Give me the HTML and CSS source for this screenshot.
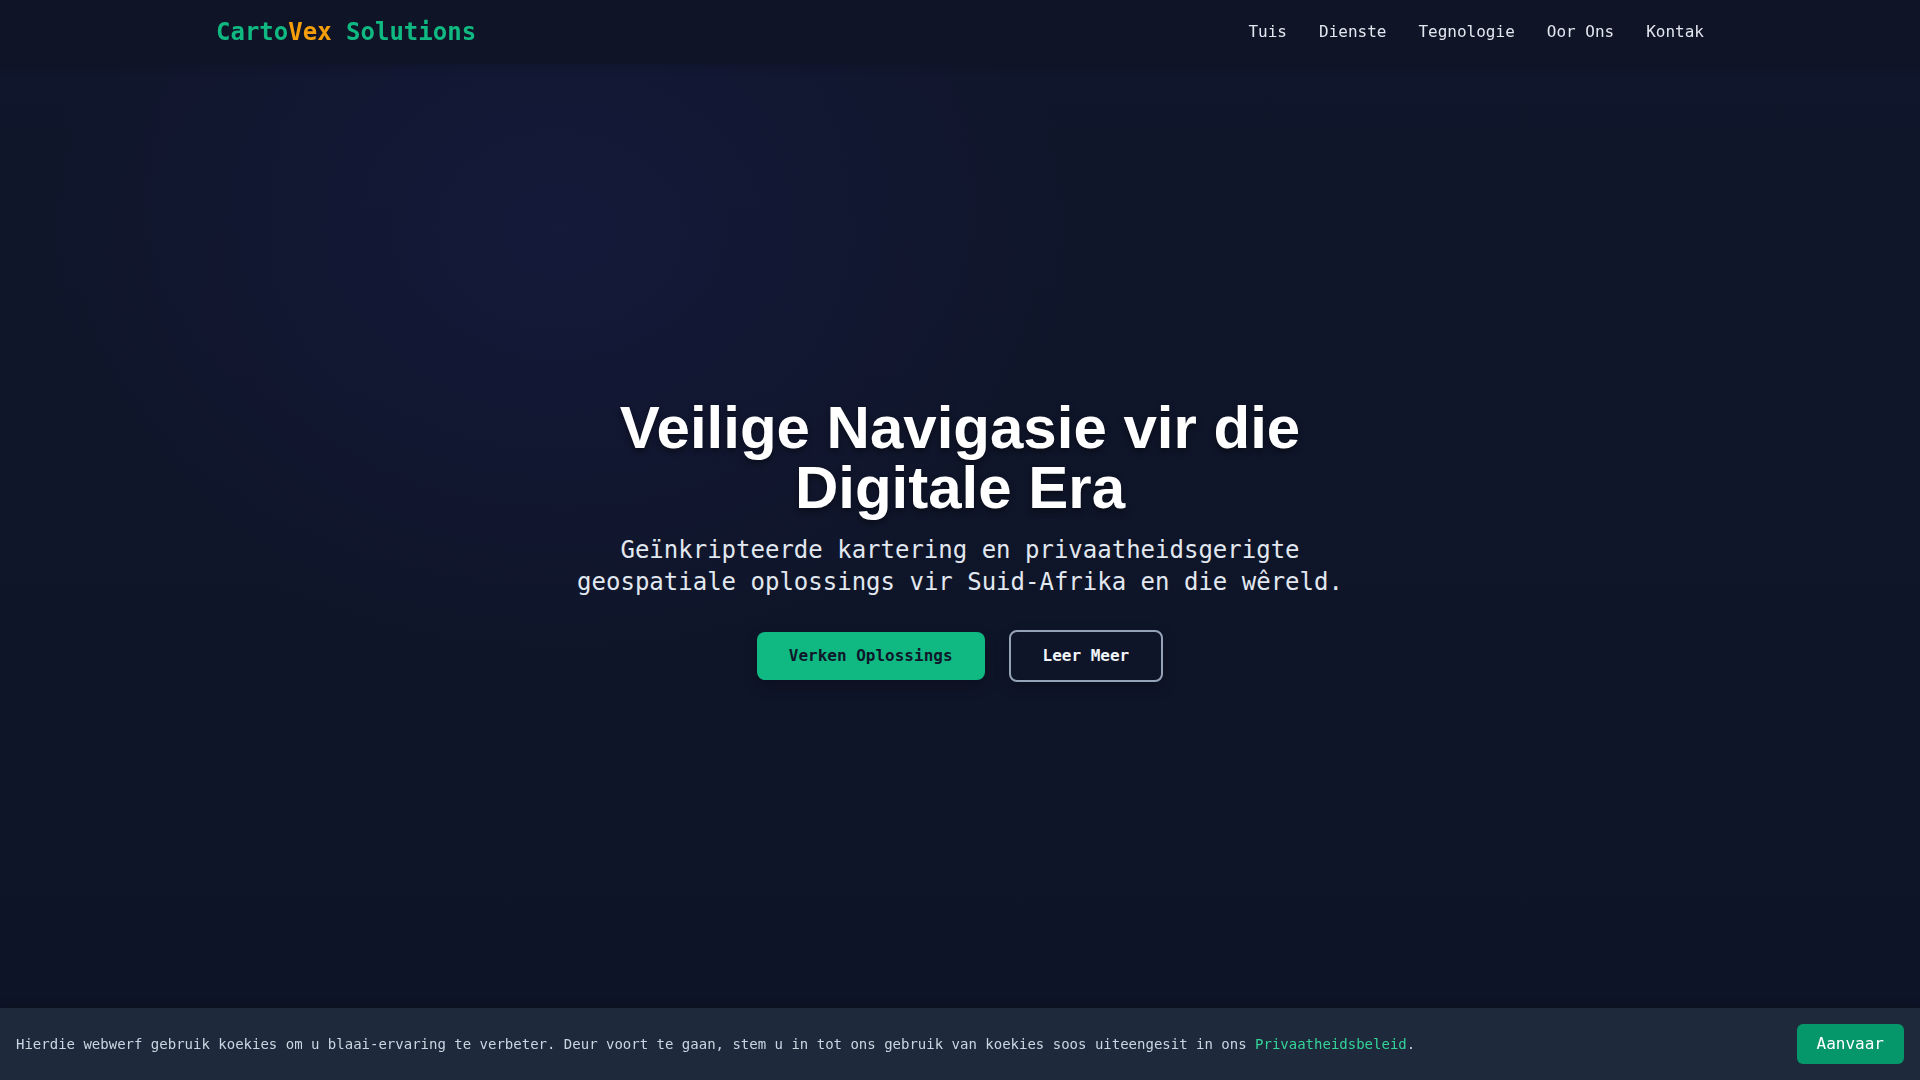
FILE: index.html
```html
<!DOCTYPE html>
<html lang="af">

<head>
    <meta charset="UTF-8">
    <title>CartoVex Solutions</title>
    <link rel="stylesheet" href="styles.css">
</head>

<body>
    <header class="site-header">
        <div class="container header-inner">
            <a href="#" class="logo">Carto<span class="logo-accent">Vex</span> Solutions</a>
            <nav class="main-nav">
                <a href="#tuis">Tuis</a>
                <a href="#dienste">Dienste</a>
                <a href="#tegnologie">Tegnologie</a>
                <a href="#oor-ons">Oor Ons</a>
                <a href="#kontak">Kontak</a>
            </nav>
        </div>
    </header>

    <section class="hero" id="tuis">
        <div class="hero-content">
            <h1 class="hero-title">Veilige Navigasie vir die Digitale Era</h1>
            <p class="hero-text">Geïnkripteerde kartering en privaatheidsgerigte geospatiale oplossings vir Suid-Afrika en die wêreld.</p>
            <div class="hero-actions">
                <a href="#dienste" class="btn btn-primary">Verken Oplossings</a>
                <a href="#oor-ons" class="btn btn-outline">Leer Meer</a>
            </div>
        </div>
    </section>

    <div class="cookie-bar">
        <p>Hierdie webwerf gebruik koekies om u blaai-ervaring te verbeter. Deur voort te gaan, stem u in tot ons gebruik van koekies soos uiteengesit in ons <a href="#privaatheid">Privaatheidsbeleid</a>.</p>
        <button class="cookie-accept">Aanvaar</button>
    </div>
</body>

</html>
```

FILE: styles.css
```css
* {
    box-sizing: border-box;
}

body {
    margin: 0;
    font-family: "DejaVu Sans Mono", monospace;
    background-color: #0f1528;
    color: #e2e8f0;
}

a {
    text-decoration: none;
    color: inherit;
}

.container {
    max-width: 1536px;
    margin: 0 auto;
    padding: 0 24px;
}

/* header */
.site-header {
    position: fixed;
    top: 0;
    left: 0;
    right: 0;
    z-index: 10;
    background: rgba(15, 20, 38, 0.85);
    box-shadow: 0 2px 10px rgba(0, 0, 0, 0.15);
}

.header-inner {
    display: flex;
    justify-content: space-between;
    align-items: center;
    padding-top: 16px;
    padding-bottom: 16px;
}

.logo {
    font-size: 24px;
    line-height: 32px;
    font-weight: bold;
    color: #10b981;
}

.logo-accent {
    color: #f59e0b;
}

.main-nav {
    display: flex;
    gap: 32px;
    font-size: 16px;
    line-height: 24px;
}

.main-nav a {
    color: #e2e8f0;
}

/* hero */
.hero {
    min-height: 100vh;
    display: flex;
    align-items: center;
    justify-content: center;
    text-align: center;
    padding: 0 24px;
    background:
        radial-gradient(ellipse 520px 420px at 560px 230px, rgba(24, 28, 70, 0.55), transparent 100%),
        linear-gradient(180deg, #10162b 0%, #0f1529 60%, #0e1427 100%);
}

.hero-content {
    max-width: 896px;
    display: flex;
    flex-direction: column;
    align-items: center;
}

.hero-title {
    margin: 0 0 16px;
    font-family: "Liberation Sans", Arial, sans-serif;
    font-size: 60px;
    line-height: 60px;
    font-weight: bold;
    color: #ffffff;
    text-shadow: 0 3px 6px rgba(0, 0, 0, 0.45);
}

.hero-text {
    max-width: 768px;
    margin: 0 0 32px;
    font-size: 24px;
    line-height: 32px;
    color: #e2e8f0;
}

.hero-actions {
    display: flex;
    gap: 24px;
    align-items: center;
}

.btn {
    display: inline-block;
    padding: 12px 32px;
    font-size: 16px;
    line-height: 24px;
    font-weight: bold;
    border-radius: 8px;
    box-shadow: 0 6px 14px rgba(0, 0, 0, 0.25);
}

.btn-primary {
    background-color: #10b981;
    color: #0f172a;
}

.btn-outline {
    border: 2px solid #94a3b8;
    color: #f1f5f9;
}

/* cookie bar */
.cookie-bar {
    position: fixed;
    left: 0;
    right: 0;
    bottom: 0;
    display: flex;
    justify-content: space-between;
    align-items: center;
    padding: 16px;
    background-color: #1e293b;
    box-shadow: 0 -2px 8px rgba(0, 0, 0, 0.2);
}

.cookie-bar p {
    margin: 0;
    font-size: 14px;
    line-height: 20px;
    color: #cbd5e1;
}

.cookie-bar p a {
    color: #34d399;
}

.cookie-accept {
    padding: 8px 20px;
    font-family: "DejaVu Sans Mono", monospace;
    font-size: 16px;
    line-height: 24px;
    color: #ffffff;
    background-color: #059669;
    border: none;
    border-radius: 6px;
    cursor: pointer;
}
```
